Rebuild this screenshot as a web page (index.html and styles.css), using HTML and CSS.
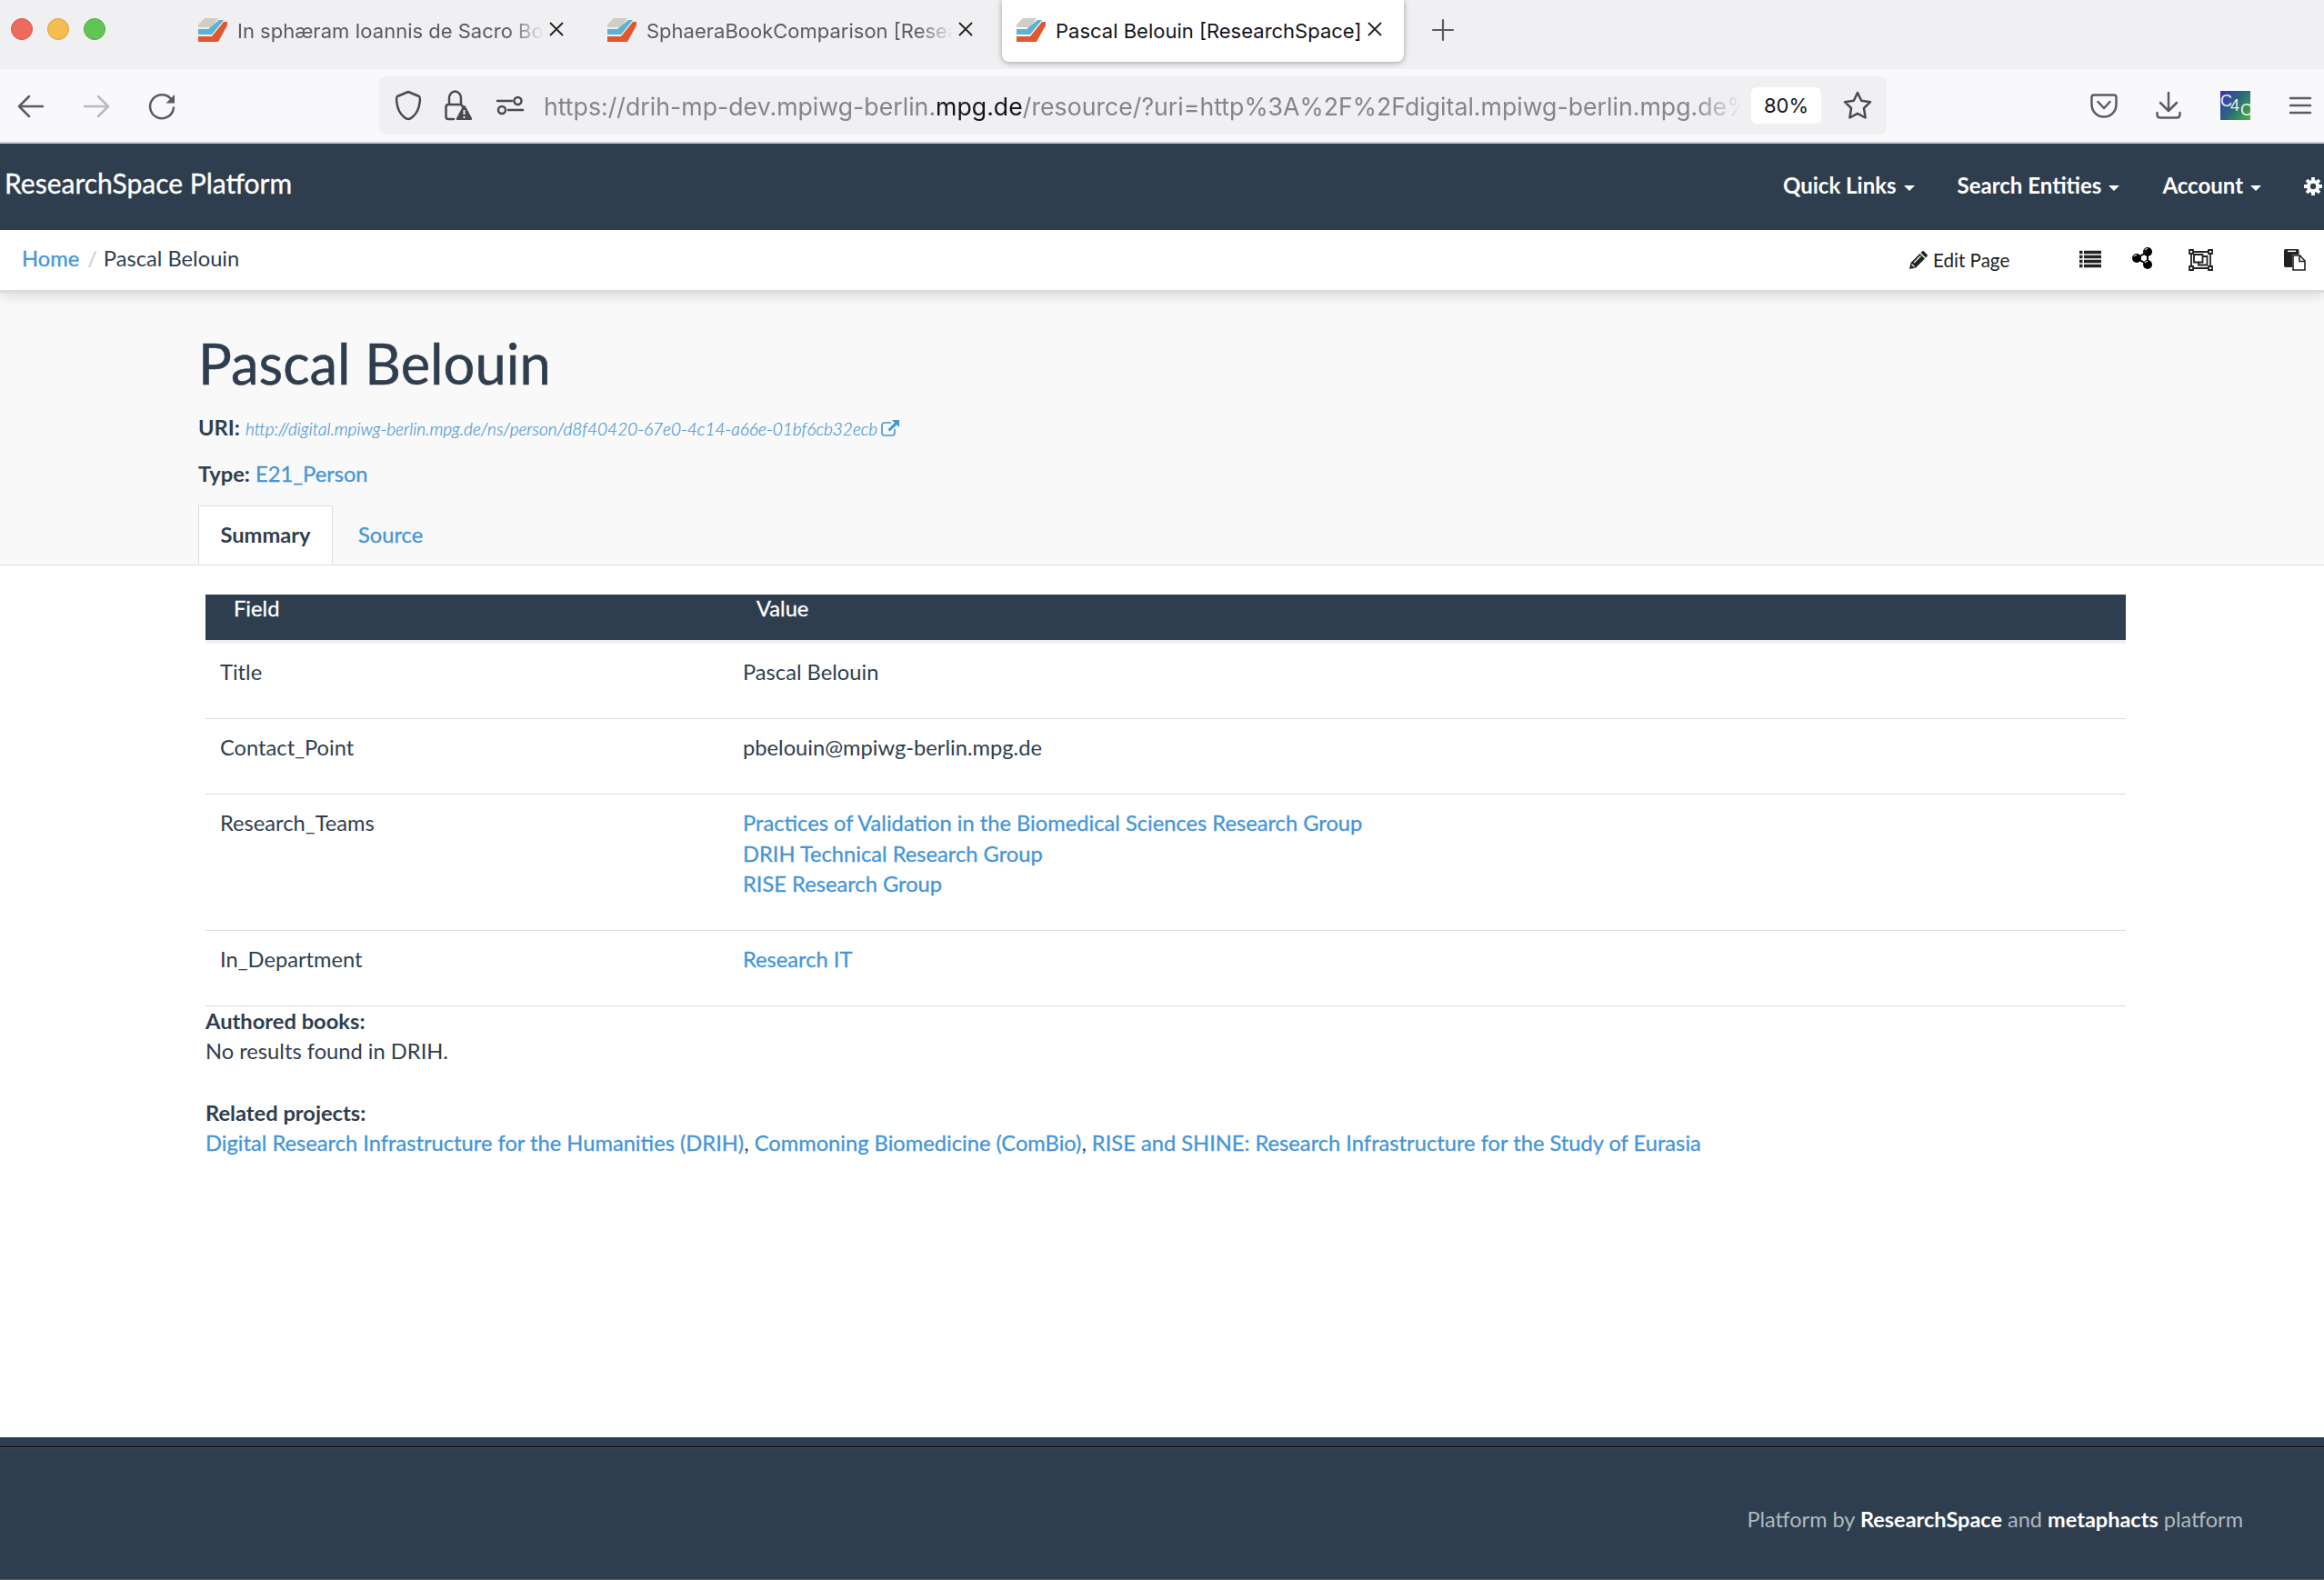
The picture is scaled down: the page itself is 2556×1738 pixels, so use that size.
FILE: index.html
```html
<!DOCTYPE html>
<html lang="en">
<head>
<meta charset="utf-8">
<title>Pascal Belouin [ResearchSpace]</title>
<link rel="stylesheet" href="styles.css">
</head>
<body>
<svg class="defs" width="0" height="0">
  <symbol id="favicon" viewBox="0 0 32 26">
    <path d="M7 0H22L15 10H0V7Z" fill="#d0ccc6"/>
    <path d="M0 12H11L23 2H28L15 18H0Z" fill="#5cb3d1"/>
    <path d="M0 20H15L28 4H32V8L22 26H0Z" fill="#e0582f"/>
  </symbol>
  <symbol id="close" viewBox="0 0 16 16"><path d="M1 1L15 15M15 1L1 15" stroke="#222" stroke-width="1.8" fill="none"/></symbol>
</svg>

<header class="tabstrip">
  <div class="lights"><i class="light red"></i><i class="light yellow"></i><i class="light green"></i></div>
  <div class="tab"><svg class="favicon"><use href="#favicon"/></svg><span class="tab-title fade">In sphæram Ioannis de Sacro Bo</span><svg class="close"><use href="#close"/></svg></div>
  <div class="tab"><svg class="favicon"><use href="#favicon"/></svg><span class="tab-title fade">SphaeraBookComparison [Resea</span><svg class="close"><use href="#close"/></svg></div>
  <div class="tab active"><svg class="favicon"><use href="#favicon"/></svg><span class="tab-title">Pascal Belouin [ResearchSpace]</span><svg class="close"><use href="#close"/></svg></div>
  <svg class="newtab" viewBox="0 0 24 24"><path d="M12 1V23M1 12H23" stroke="#5b5b66" stroke-width="2.2" stroke-linecap="round"/></svg>
</header>

<div class="toolbar">
  <svg class="nav-icon" viewBox="0 0 32 32"><path d="M29 16H3M14 5L3 16L14 27" class="line"/></svg>
  <svg class="nav-icon dim" viewBox="0 0 32 32"><path d="M3 16H29M18 5L29 16L18 27" class="line"/></svg>
  <svg class="nav-icon" viewBox="0 0 32 32"><path d="M27.5 10A13 13 0 1 0 29 17.500" class="line"/><path d="M30 3V12.500H20.500Z" fill="#5b5b66"/></svg>
  <div class="urlbar">
    <svg class="url-icon shield" viewBox="0 0 30 34"><path d="M15 2L27 7C28.500 8 28 17 25 23C22 29 17 32 15 32S8 29 5 23C2 17 1.500 8 3 7Z" class="uline"/></svg>
    <svg class="url-icon lock" viewBox="0 0 32 34"><path d="M11 32H5Q2.500 32 2.500 29V19Q2.500 16 5 16H18Q20 16 20.500 18M6 16V9A6.500 7.500 0 0 1 19 9V16" class="uline"/><path d="M22.500 17Q23.500 17 24 18L31 31Q31.500 33 30 33H15Q13 33 14 31L21 18Q21.500 17 22.500 17Z" fill="#4a4a52"/><path d="M22.500 22V27M22.500 29V31" stroke="#f0f0f2" stroke-width="2"/></svg>
    <svg class="url-icon perms" viewBox="0 0 30 22"><path d="M1 6H17M13 16H29" class="uline"/><circle cx="23.500" cy="6" r="4" class="uline"/><circle cx="6" cy="16" r="4" class="uline"/></svg>
    <div class="url">https://drih-mp-dev.mpiwg-berlin.<b>mpg.de</b>/resource/?uri=http%3A%2F%2Fdigital.mpiwg-berlin.mpg.de%</div>
    <span class="zoom">80%</span>
    <svg class="star" viewBox="0 0 32 32"><path d="M16 2L20.200 10.800L30 12.200L23 19L24.600 29.500L16 24.800L7.400 29.500L9 19L2 12.200L11.800 10.800Z" class="uline"/></svg>
  </div>
  <div class="tools">
    <svg class="pocket" viewBox="0 0 30 27"><path d="M4 1.500H26Q28.500 1.500 28.500 4V12A13.500 13.500 0 0 1 1.500 12V4Q1.500 1.500 4 1.500ZM8.500 9L15 16L21.500 9" class="line"/></svg>
    <svg class="download" viewBox="0 0 28 30"><path d="M14 1V20M5 12L14 21L23 12M1.500 23V25Q1.500 28.500 5 28.500H23Q26.500 28.500 26.500 25V23" class="line"/></svg>
    <span class="ext"><i>C</i><i>4</i><i>C</i></span>
    <svg class="burger" viewBox="0 0 24 20"><path d="M1 2H23M1 10H23M1 18H23" class="line"/></svg>
  </div>
</div>

<nav class="navbar">
  <a class="brand">ResearchSpace Platform</a>
  <div class="menu">
    <a>Quick Links<i class="caret"></i></a><a>Search Entities<i class="caret"></i></a><a>Account<i class="caret"></i></a>
    <svg class="gear" viewBox="0 0 20 20"><circle cx="10" cy="10" r="5.200" fill="none" stroke="#fff" stroke-width="4"/><path d="M10 0V4M10 16V20M0 10H4M16 10H20M3 3L5.500 5.500M14.500 14.500L17 17M17 3L14.500 5.500M5.500 14.500L3 17" stroke="#fff" stroke-width="3.800"/></svg>
  </div>
</nav>

<div class="crumbs">
  <div class="trail"><a>Home</a><span class="sep">/</span><span>Pascal Belouin</span></div>
  <div class="actions">
    <svg class="pencil" viewBox="0 0 20 20"><path d="M0 20L1.500 13L11.500 3L17 8.500L7 18.500ZM12.500 2L14 .5Q15 -.3 16 .5L19.500 4Q20.300 5 19.500 6L18 7.500Z" fill="#222"/><path d="M2.500 14.500L5.500 17.500M5 13L12.500 5.500" stroke="#fff" stroke-width="1.200"/></svg>
    <span class="edit">Edit Page</span>
    <svg class="list" viewBox="0 0 24 20"><path d="M0 2.500H3.500M0 7.500H3.500M0 12.500H3.500M0 17.500H3.500M5 2.500H24M5 7.500H24M5 12.500H24M5 17.500H24" stroke="#222" stroke-width="3.500"/></svg>
    <svg class="share" viewBox="0 0 22 24"><path d="M17 5L5 12L17 19Z" fill="none" stroke="#000" stroke-width="2"/><circle cx="17" cy="5" r="5"/><circle cx="5" cy="12" r="5"/><circle cx="17" cy="19" r="5"/><path d="M14 3Q15 1.500 17 1.500M2 10Q3 8.500 5 8.500M14 17Q15 15.500 17 15.500" fill="none" stroke="#fff" stroke-width="1.200"/></svg>
    <svg class="group" viewBox="0 0 27 24"><g fill="#fff" stroke="#222" stroke-width="1.800"><path d="M3 3H24V21H3Z"/><path d="M11 8H20.500V17.500H11Z"/><path d="M6 6H15.500V14.500H6Z"/><path d="M1 1H5V5H1ZM22 1H26V5H22ZM1 19H5V23H1ZM22 19H26V23H22Z"/></g></svg>
    <svg class="paste" viewBox="0 0 24 24"><path d="M1.500 0H15Q16.500 0 16.500 2V6H9V20H1.500Q0 20 0 18V2Q0 0 1.500 0Z" fill="#222"/><path d="M4 2.300H13" stroke="#fff" stroke-width="1.500"/><path d="M10 7H17.500L23 13V23H10ZM17 7V13.500H23" fill="#fff" stroke="#222" stroke-width="1.600"/></svg>
  </div>
</div>

<section class="head">
  <h1>Pascal Belouin</h1>
  <p class="uri"><b>URI:</b> <a><em>http://digital.mpiwg-berlin.mpg.de/ns/person/d8f40420-67e0-4c14-a66e-01bf6cb32ecb</em><svg class="external" viewBox="0 0 20 18"><path d="M11 3H4Q1 3 1 6V14Q1 17 4 17H12Q15 17 15 14V10" fill="none" stroke="#4595d6" stroke-width="1.600"/><path d="M12 0H20V8L17.300 5.300L9.500 12.500L7.500 10.500L15 3Z" fill="#4595d6"/></svg></a></p>
  <p class="type"><b>Type:</b> <a>E21_Person</a></p>
  <div class="tabs"><a class="on">Summary</a><a>Source</a></div>
</section>

<main>
  <table>
    <thead><tr><th>Field</th><th>Value</th></tr></thead>
    <tbody>
      <tr><td>Title</td><td>Pascal Belouin</td></tr>
      <tr><td>Contact_Point</td><td>pbelouin@mpiwg-berlin.mpg.de</td></tr>
      <tr><td>Research_Teams</td><td><a>Practices of Validation in the Biomedical Sciences Research Group</a><br><a>DRIH Technical Research Group</a><br><a>RISE Research Group</a></td></tr>
      <tr><td>In_Department</td><td><a>Research IT</a></td></tr>
    </tbody>
  </table>
  <b>Authored books:</b>
  <p>No results found in DRIH.</p>
  <b>Related projects:</b>
  <p><a>Digital Research Infrastructure for the Humanities (DRIH)</a>, <a>Commoning Biomedicine (ComBio)</a>, <a>RISE and SHINE: Research Infrastructure for the Study of Eurasia</a></p>
</main>

<footer><div>Platform by <b>ResearchSpace</b> and <b>metaphacts</b> platform</div></footer>
</body>
</html>
```

FILE: styles.css
```css
* { box-sizing: border-box; }
body { margin: 0; width: 2556px; height: 1738px; overflow: hidden; display: flex; flex-direction: column; background: #fff; color: #2f3e4e; font: 23.700px/33.6px Lato, sans-serif; }
a { color: #4595d6; -webkit-text-stroke: .3px currentColor; }
p, h1 { margin: 0; }
svg { display: block; flex: none; overflow: visible; }
.defs { position: absolute; }
.line { fill: none; stroke: #5b5b66; stroke-width: 2.500; stroke-linecap: round; stroke-linejoin: round; }
.uline { fill: none; stroke: #4a4a52; stroke-width: 2.500; stroke-linecap: round; stroke-linejoin: round; }

.tabstrip { height: 76px; flex: none; background: #f0f0f2; display: flex; align-items: flex-start; font: 22px/28px Inter, sans-serif; color: #5b5b60; }
.lights { display: flex; gap: 16px; padding: 20px 0 0 12px; width: 202px; }
.light { width: 24px; height: 24px; border-radius: 50%; border: 1px solid #d9564b; background: #ee6a5f; }
.yellow { background: #f5bd4f; border-color: #d9a13c; }
.green { background: #61c554; border-color: #4fa73f; }
.tab { width: 442px; height: 68px; margin-right: 8px; padding: 0 20px 0 16px; display: flex; align-items: flex-start; }
.tab.active { background: #fff; color: #15141a; border-radius: 0 0 8px 8px; box-shadow: 0 1px 6px rgba(0,0,0,.35); }
.favicon { width: 32px; height: 26px; margin-top: 20px; }
.tab-title { width: 338px; flex: none; margin: 20px 5px 0 11px; white-space: nowrap; }
.fade { -webkit-mask: linear-gradient(90deg, #000 88%, transparent); mask: linear-gradient(90deg, #000 88%, transparent); }
.close { width: 16px; height: 16px; margin-top: 24px; }
.newtab { width: 24px; height: 24px; margin: 21px 0 0 23px; }

.toolbar { height: 82px; flex: none; background: #f9f9fb; border-bottom: 2px solid #ccc; display: flex; align-items: flex-start; padding-left: 18px; }
.nav-icon { width: 32px; height: 32px; margin: 25px 40px 0 0; }
.dim { opacity: .4; }
.urlbar { width: 1658px; height: 64px; margin: 8px 0 0 183px; border-radius: 8px; background: #f0f0f2; display: flex; align-items: center; padding-left: 16px; }
.shield { width: 32px; height: 34px; }
.lock { width: 34px; height: 34px; margin-left: 22px; }
.perms { width: 30px; height: 22px; margin-left: 25px; }
.url { width: 1318px; flex: none; padding-top: 2px; margin-left: 22px; overflow: hidden; white-space: nowrap; font: 26.700px/36px Inter, sans-serif; color: #84848a; -webkit-mask: linear-gradient(90deg, #000 96%, transparent); mask: linear-gradient(90deg, #000 96%, transparent); }
.url b { font-weight: 400; color: #15141a; }
.zoom { width: 77px; height: 40px; flex: none; margin-left: 10px; background: #fff; border-radius: 6px; font: 22px/41px Inter, sans-serif; color: #15141a; text-align: center; }
.star { width: 32px; height: 32px; margin-left: 24px; }
.tools { display: flex; align-items: center; height: 80px; margin-left: 224px; }
.pocket { width: 30px; height: 27px; }
.download { width: 28px; height: 30px; margin-left: 42px; }
.ext { display: flex; width: 33px; height: 32px; margin-left: 43px; background: linear-gradient(125deg, #3c2fc0, #2b6a78 50%, #4bb43c); color: #e8eef0; font: 18px/18px "Liberation Sans Narrow", "Liberation Sans", sans-serif; }
.ext i { width: 11px; font-style: normal; }
.ext i:nth-child(1) { padding-top: 2px; }
.ext i:nth-child(2) { padding-top: 7px; }
.ext i:nth-child(3) { padding-top: 12px; }
.burger { width: 24px; height: 20px; margin-left: 43px; }

.navbar { height: 95px; flex: none; background: #2f3e4e; display: flex; justify-content: space-between; }
.brand { color: #fff; font-size: 30px; line-height: 36px; padding: 25px 0 0 5px; }
.menu { display: flex; width: 595px; padding-top: 29px; font-size: 24px; }
.menu a { color: #fff; font-weight: 700; margin-right: 47px; white-space: nowrap; display: flex; -webkit-text-stroke: 0; }
.caret { border: 6px solid transparent; border-top: 6px solid #fff; border-bottom: 0; margin: 17px 0 0 8px; }
.gear { width: 20px; height: 20px; margin-top: 8px; }

.crumbs { height: 69px; flex: none; border-bottom: 3px solid #dcdcdc; box-shadow: 0 4px 12px rgba(0,0,0,.12); position: relative; display: flex; justify-content: space-between; }
.trail { padding: 15px 0 0 24px; }
.sep { color: #ccc; padding: 0 7px 0 9px; }
.actions { width: 456px; display: flex; align-items: flex-start; color: #222; }
.pencil { width: 20px; height: 20px; margin-top: 23px; }
.edit { width: 84px; margin: 17px 0 0 6px; font-size: 20.600px; white-space: nowrap; }
.list { width: 24px; height: 20px; margin: 22px 0 0 77px; }
.share { width: 22px; height: 24px; margin: 19px 0 0 34px; }
.group { width: 27px; height: 24px; margin: 21px 0 0 40px; }
.paste { width: 24px; height: 24px; margin: 21px 0 0 78px; }

.head { height: 300px; flex: none; background: #f9f9f9; border-bottom: 1px solid #ddd; padding: 43px 0 0 218px; display: flex; flex-direction: column; }
h1 { font-size: 61.500px; line-height: 68px; font-weight: 400; -webkit-text-stroke: .5px currentColor; }
.uri { margin-top: 21px; }
.uri a { font-size: 19px; font-weight: 300; -webkit-text-stroke: .2px currentColor; }
.external { display: inline-block; width: 20px; height: 18px; margin-left: 4px; vertical-align: -1px; }
.type { margin-top: 16px; }
.tabs { display: flex; margin-top: 18px; height: 67px; }
.tabs a { padding: 16px 28px 0; }
.tabs .on { width: 148px; padding: 15px 0 0; text-align: center; background: #fff; border: 1px solid #ddd; border-bottom: 0; font-weight: 700; color: #2f3e4e; -webkit-text-stroke: 0; }

main { flex: 1; padding: 32px 218px 0 226px; }
table { width: 2112px; border-collapse: separate; border-spacing: 0; table-layout: fixed; }
th { height: 50px; padding: 0 31px; background: #2f3e4e; color: #fff; font-weight: 400; line-height: 31px; text-align: left; vertical-align: top; -webkit-text-stroke: .3px currentColor; }
th:first-child { width: 575px; }
td { height: 83px; padding: 15px 16px 33px; vertical-align: top; border-bottom: 1px solid #ddd; }
tbody tr:first-child td { border-top: 4px solid #ecf0f1; height: 87px; }
main p + b { display: block; margin-top: 33.600px; }

footer { height: 157px; flex: none; background: #2f3e4e; border-bottom: 1px solid #58636f; color: #b1b8be; text-align: right; font-size: 23.500px; }
footer div { margin-top: 10px; border-top: 1px solid #000; box-shadow: inset 0 1px #555; padding: 63px 89px 0 0; }
footer b { color: #fff; }
```
